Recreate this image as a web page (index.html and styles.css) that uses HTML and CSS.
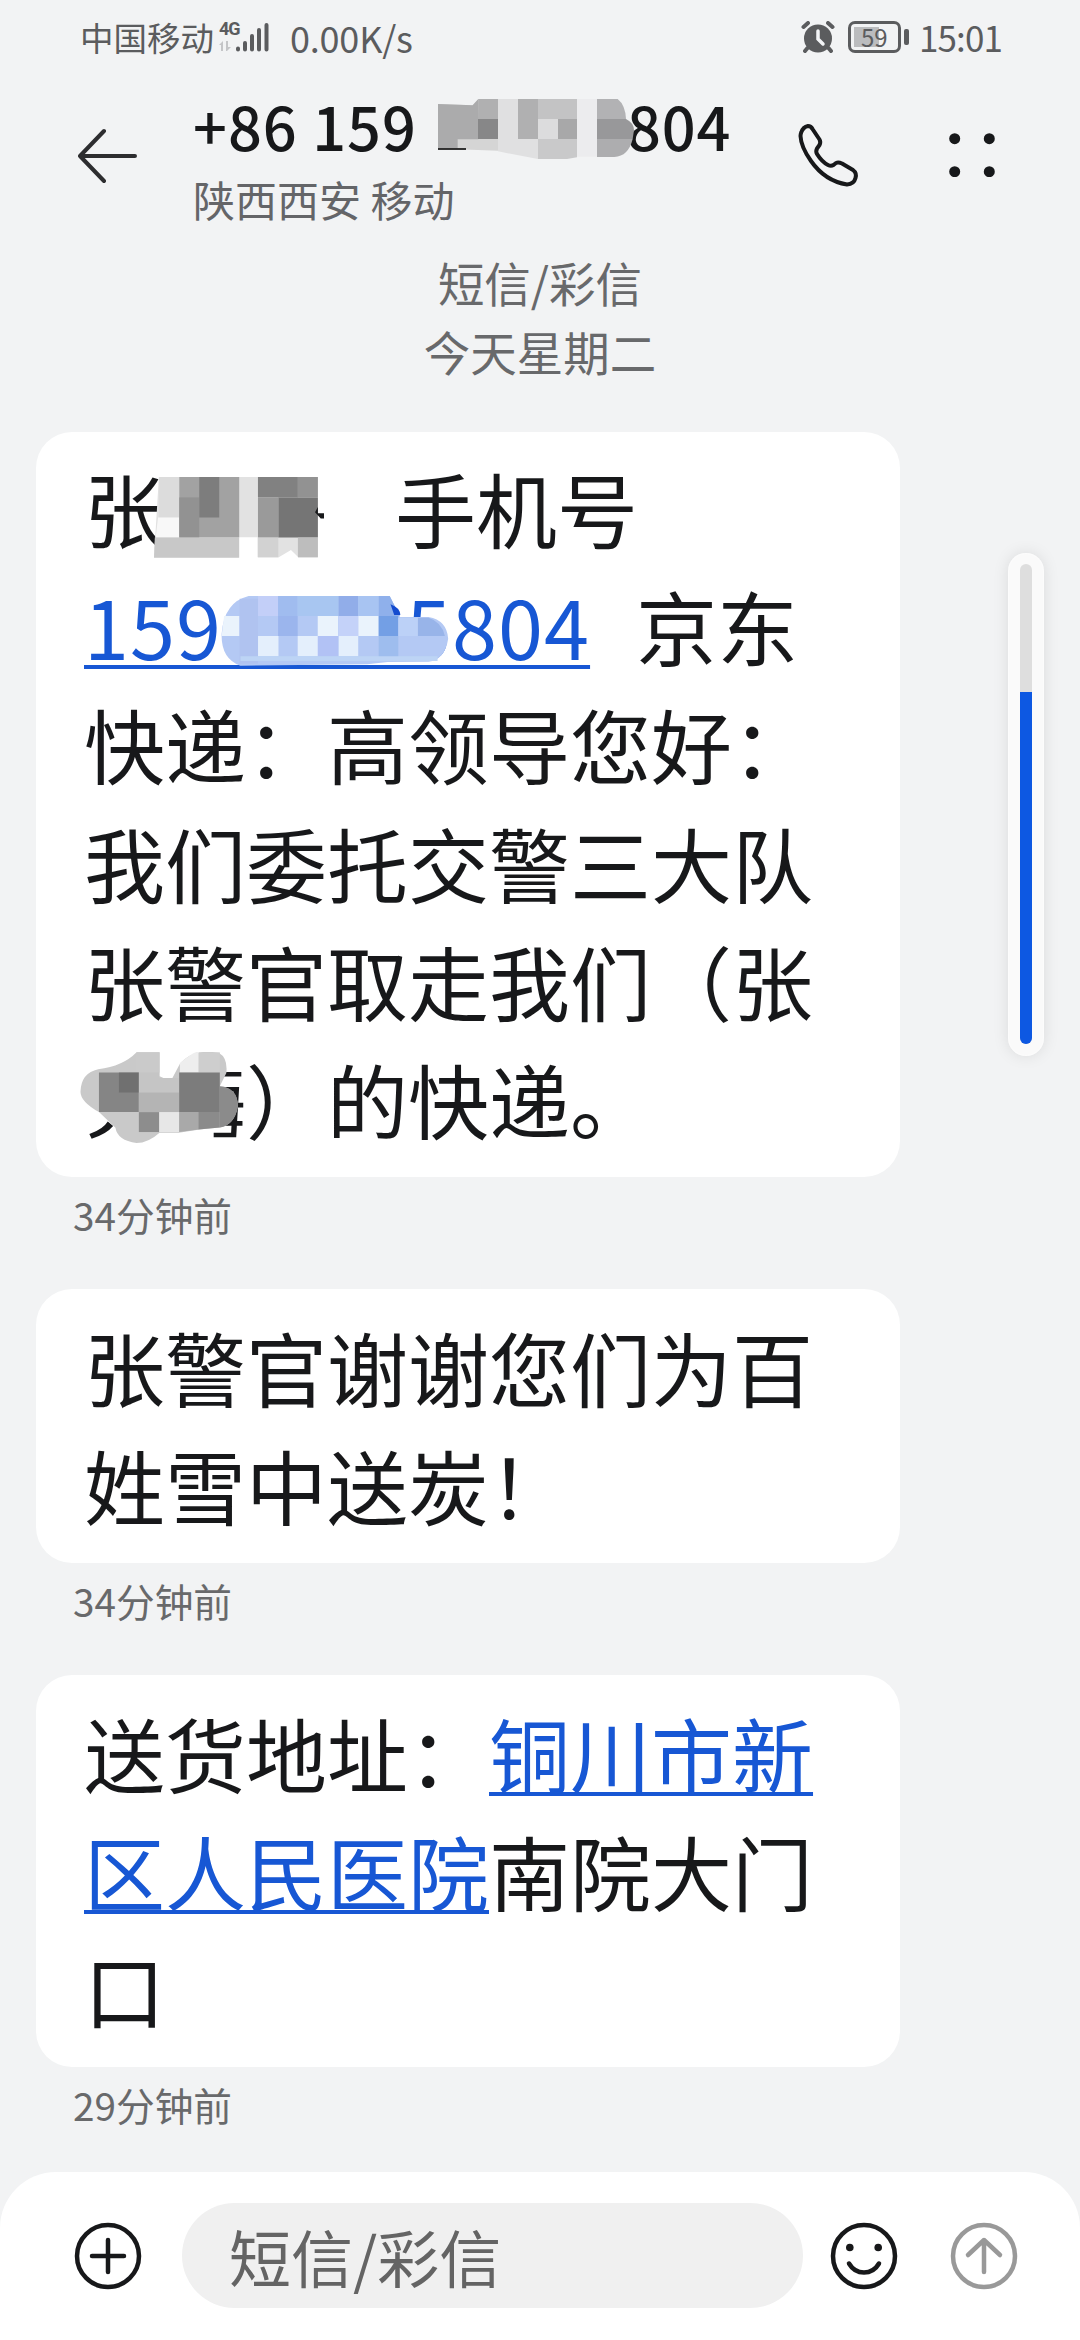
FILE: index.html
```html
<!DOCTYPE html>
<html lang="zh-CN">
<head>
<meta charset="utf-8">
<title>短信/彩信</title>
<link rel="stylesheet" href="styles.css">
</head>
<body>
<div class="screen">
  <div class="status">
    <span class="carrier">中国移动</span>
    <span class="network">
      <span class="gen">4G</span>
      <svg class="signal" viewBox="0 0 52 33" width="52" height="33">
        <g fill="#c4c5c7"><path d="M0 24l4-4v10H2v-6zM7 20h2v6h3l-4 4H7z"/></g>
        <g stroke="#5b5c5e" stroke-width="4" stroke-linecap="round"><path d="M19 27.500v1M26 22v6.500M33 15v13.500M40 9v19.500M47.500 4v24.500"/></g>
      </svg>
    </span>
    <span class="speed">0.00K/s</span>
    <svg class="alarm" viewBox="0 0 34 32" width="34" height="32">
      <circle cx="17" cy="17.500" r="14" fill="#5b5c5e"/>
      <path d="M2.500 6L7 2M27 2l4.500 4M6.500 27L4 30M27.500 27l2.500 3" stroke="#5b5c5e" stroke-width="4" stroke-linecap="round"/>
      <path d="M17 10v8l5 5" fill="none" stroke="#f3f4f6" stroke-width="3.500" stroke-linecap="round"/>
    </svg>
    <span class="battery"><span class="charge"></span><span class="percent">59</span></span>
    <span class="clock">15:01</span>
  </div>

  <div class="header">
    <svg class="back" viewBox="0 0 60 56" width="60" height="56"><path d="M2 28h55M26 3L2 28l24 25" fill="none" stroke="#2d2d2f" stroke-width="4" stroke-linecap="round" stroke-linejoin="round"/></svg>
    <div class="contact">
      <div class="number"><span>+86 159</span><svg class="blur-number" viewBox="51 57 588 180" width="196" height="60">
        <path d="M51 72L155 76L172 57H231V212L110 208H51z" fill="#d5d5d5"/>
        <path d="M51 72L155 76L172 57V178H110V205H51z" fill="#ababac"/>
        <path d="M172 57h59v60h-60z" fill="#b0b0b1"/><path d="M171 117h60v60h-60z" fill="#878788"/>
        <path d="M231 57h60v60h60v120L231 214z" fill="#e0e0e1"/>
        <path d="M291 57h60v120h-60z" fill="#b0b0b1"/>
        <path d="M351 57h117v60H351z" fill="#c3c3c4"/><path d="M351 117h60v60h-60z" fill="#dcdcdd"/>
        <path d="M411 117h57v60h-57z" fill="#a8a8a9"/><path d="M351 177h117v55l-30 5h-87z" fill="#c9c9ca"/>
        <path d="M468 57h60v173h-60z" fill="#ececee"/>
        <path d="M528 57h62Q613 75 615 117H528z" fill="#b2b2b4"/><path d="M528 117h87q24 12 24 34l-4 26H528z" fill="#98989a"/>
        <path d="M528 177h107q-13 52-55 54h-52z" fill="#adadaf"/>
        <path d="M51 207h84" stroke="#111" stroke-width="5"/>
      </svg><span>804</span></div>
      <div class="region">陕西西安 移动</div>
    </div>
    <svg class="call" viewBox="0 0 64 64" width="64" height="64"><path d="M4.200 9.500Q6 4 11 3Q14 3 15.500 6L22.500 16.500Q24 19 22.500 22L20 25.500Q18.500 28.500 20 31Q25 39 31 42Q34 43.500 36.500 42L39 40Q41.500 39 45 40.500L56 47Q60 50 58.500 55Q57 61 50 61.500Q28 58 14 38Q4 24 3.500 13Q3.600 11 4.200 9.500z" fill="none" stroke="#17181a" stroke-width="4" stroke-linejoin="round"/></svg>
    <svg class="more" viewBox="0 0 46 44" width="46" height="44" fill="#17181a"><circle cx="5.700" cy="5.700" r="5.500"/><circle cx="40.300" cy="5.700" r="5.500"/><circle cx="5.700" cy="38.700" r="5.500"/><circle cx="40.300" cy="38.700" r="5.500"/></svg>
  </div>

  <div class="dateline"><div class="channel">短信/彩信</div><div>今天星期二</div></div>

  <div class="thread">
    <div class="bubble first">
      张<span class="hidden-name"></span>手机号<br>
      <span class="link digits">159&#8199;&#8199;&#8199;&#8199;5804</span><span class="gap"></span>京东<br>
      快递：高领导您好：<br>
      我们委托交警三大队<br>
      张警官取走我们（张<br>
      <span class="hidden-pair"></span>）的快递。
      <svg class="mosaic name-top" viewBox="328 170 417 242" preserveAspectRatio="none">
        <path d="M340 170h390v240h-48l-18-22-30 22h-52v-60h-46v60H328z" fill="#e2e2e2"/>
        <path d="M340 170h50v121h-50z" fill="#dcdcdc"/><path d="M338 291h52v60h-58z" fill="#f8f8f8"/>
        <path d="M390 170h147v181H390z" fill="#a2a2a2"/><path d="M390 231h49v120h-49z" fill="#929292"/>
        <path d="M439 170h49v121h-49z" fill="#7d7d7d"/><path d="M330 351h207v60H328z" fill="#c8c8c8"/>
        <path d="M583 170h98v61h-98z" fill="#818181"/><path d="M681 170h49v61h-49z" fill="#929292"/>
        <path d="M583 231h50v120h-50z" fill="#9a9a9a"/><path d="M633 231h97v120h-97z" fill="#757575"/>
        <path d="M583 351h50v59h-50z" fill="#d2d2d2"/><path d="M681 351h49v59h-49z" fill="#bdbdbd"/>
        <path d="M723 275l7-15v18h15v16h-8z" fill="#17181a"/>
      </svg>
      <svg class="mosaic phone" viewBox="490 527 560 210" preserveAspectRatio="none">
        <path d="M560 527H905L930 590H1000Q1045 600 1048 655Q1040 718 1000 724L900 725 850 732 540 736Q492 715 494 640Q500 545 560 527z" fill="#b4c9f4"/>
        <path d="M538 535h45v195h-45z" fill="#b0c3f0"/><path d="M583 527h49v60h-49z" fill="#c3cff8"/>
        <path d="M632 527h48v60h-48z" fill="#a0bcef"/><path d="M632 587h48v60h-48z" fill="#9bb5ed"/><path d="M680 527h100v60H680z" fill="#a8c6f1"/>
        <path d="M780 527h48v60h-48z" fill="#91ade9"/><path d="M828 527h50v60h-50z" fill="#a8c4f2"/><path d="M878 527h27l25 60h-52z" fill="#8fb0eb"/>
        <path d="M500 587h37v60h-43zM729 587h50v60h-50zM828 587h50v60h-50z" fill="#eaf3fc"/>
        <path d="M583 647h50v61h-50zM680 647h50v61h-50zM780 647h48v61h-48z" fill="#e4effc"/><path d="M780 587h48v60h-48z" fill="#c4d2f9"/>
        <path d="M729 647h50v61h-50z" fill="#b2c2f5"/><path d="M878 587h48v60h-48z" fill="#739fe5"/>
        <path d="M878 647h48v74h-48z" fill="#9ebdee"/><path d="M926 592h48v55h-48z" fill="#bcd1f7"/><path d="M974 592h26q32 12 40 55h-66z" fill="#98b4e9"/>
        <path d="M540 708H1022v14H540z" fill="#bdd4f5"/><path d="M907 552q23 10 24 32h-15z" fill="#144bcf"/>
      </svg>
      <svg class="mosaic name-end" viewBox="50 67 430 280" preserveAspectRatio="none">
        <path d="M77 314q36-15 48-38l14 14q-18 25-56 38z" fill="#17181a"/>
        <path d="M425 134h48M410 179h50l-7 138h-52M450 227h28M430 282h46" fill="none" stroke="#17181a" stroke-width="14"/>
        <path d="M200 68h60v72l29 15 24-53Q350 55 415 70Q438 85 434 130L417 170Q464 177 464 230Q455 287 417 294L365 300 310 310H260Q230 341 200 341Q150 333 145 295L102 248Q52 215 54 185Q56 130 100 119 165 110 200 68z" fill="#c9c9c9"/>
        <path d="M200 68h60v61h-60z" fill="#cacaca"/><path d="M313 100q42-40 49-32v61h-49z" fill="#eee"/><path d="M362 68h55v61h-55z" fill="#cecece"/>
        <path d="M102 129h104v119H102z" fill="#858585"/><path d="M154 129h52v60h-52z" fill="#707070"/>
        <path d="M206 129h53v60h-53zM259 145h52v44h-52z" fill="#c5c5c5"/><path d="M206 189h105v59H206z" fill="#b4b4b4"/>
        <path d="M311 129h106v119H311z" fill="#7c7c7c"/><path d="M417 170q47 4 47 60-8 57-47 64z" fill="#8b8b8b"/>
        <path d="M206 248h53v60h-53z" fill="#8d8d8d"/><path d="M259 248h52v60h-52z" fill="#e7e7e7"/><path d="M311 248h50v52l-50 8z" fill="#a9a9a9"/><path d="M361 248h56v46l-56 6z" fill="#8b8b8b"/>
      </svg>
    </div>
    <div class="time">34分钟前</div>
    <div class="bubble">张警官谢谢您们为百<br>姓雪中送炭！</div>
    <div class="time">34分钟前</div>
    <div class="bubble">送货地址：<span class="link">铜川市新</span><br><span class="link">区人民医院</span>南院大门<br>口</div>
    <div class="time">29分钟前</div>
  </div>

  <div class="composer">
    <svg class="add" viewBox="0 0 68 68" width="68" height="68" fill="none" stroke="#17181a" stroke-width="4.500" stroke-linecap="round"><circle cx="34" cy="34" r="31"/><path d="M34 18v32M18 34h32"/></svg>
    <div class="field">短信/彩信</div>
    <svg class="emoji" viewBox="0 0 68 68" width="68" height="68" fill="none" stroke="#17181a" stroke-width="4.500" stroke-linecap="round"><circle cx="34" cy="34" r="31"/><path d="M19 41.500c7 12 23 12 30 0"/><g fill="#17181a" stroke="none"><circle cx="19.800" cy="25.500" r="3.800"/><circle cx="48.200" cy="25.500" r="3.800"/></g></svg>
    <svg class="send" viewBox="0 0 68 68" width="68" height="68" fill="none" stroke="#999" stroke-width="4.500" stroke-linecap="round" stroke-linejoin="round"><circle cx="34" cy="34" r="31"/><path d="M34 50V18M18 33l16-15 16 15"/></svg>
  </div>

  <div class="volume"><div class="track"><div class="level"></div></div></div>
</div>
</body>
</html>
```

FILE: styles.css
```css
* { box-sizing: border-box; }
body { margin: 0; background: #f2f3f4; }
svg { display: block; flex: none; }

.screen {
  position: relative;
  display: flex;
  flex-direction: column;
  width: 1080px;
  height: 2340px;
  overflow: hidden;
  background: #f2f3f4;
  color: #17181a;
  font-family: "Noto Sans CJK SC", sans-serif;
  white-space: nowrap;
}

/* Status bar */
.status {
  flex: none;
  display: flex;
  align-items: center;
  height: 74px;
  padding-left: 80px;
  color: #5b5c5e;
  font-size: 36px;
  line-height: 74px;
}
.carrier { width: 139px; font-size: 33.500px; }
.network { position: relative; width: 71px; height: 33px; }
.gen { position: absolute; left: 0; top: 0; font-family: Roboto, sans-serif; font-size: 18px; font-weight: 700; line-height: 15px; letter-spacing: -1px; }
.speed { width: 509px; font-size: 36px; letter-spacing: -0.200px; }
.alarm { width: 34px; margin-right: 13px; margin-left: 2px; }
.battery {
  position: relative;
  width: 53px;
  height: 32px;
  margin-right: 18px;
  border: 3px solid #5b5c5e;
  border-radius: 7px;
}
.battery::after { content: ""; position: absolute; right: -11px; top: 5px; width: 5px; height: 16px; border-radius: 2px; background: #5b5c5e; }
.charge { position: absolute; left: 3px; top: 3px; width: 25px; height: 20px; background: #bbbcbe; }
.percent { position: absolute; left: 10px; top: 0; font-size: 24px; line-height: 26px; }
.clock { font-size: 35px; letter-spacing: -0.900px; }

/* Conversation header */
.header { flex: none; display: flex; height: 158px; padding-left: 78px; }
.back { margin-top: 54px; }
.contact { width: 604px; padding: 6px 0 0 55px; }
.number { display: flex; height: 90px; font-size: 59.500px; font-weight: 500; line-height: 90px; }
.number span:first-child { width: 245px; letter-spacing: 1px; }
.number span:last-child { margin-left: -7px; letter-spacing: 0.800px; }
.blur-number { position: relative; z-index: 1; margin-top: 19px; }
.region { height: 58px; color: #646568; font-size: 42px; line-height: 58px; }
.call { margin: 49px 0 0 55px; }
.more { margin: 59px 0 0 88px; }

.dateline { flex: none; height: 200px; padding-top: 15px; color: #68696b; font-size: 46.500px; line-height: 69px; text-align: center; }

/* Messages */
.thread { flex: none; height: 1740px; padding-left: 36px; }
.bubble {
  position: relative;
  width: 864px;
  padding: 18px 48px 19.500px;
  border-radius: 36px;
  background: #fff;
  font-size: 81px;
  line-height: 118.200px;
  text-spacing-trim: space-all;
}
.first { padding-top: 16px; }
.link { color: #1757d4; text-decoration: underline; text-decoration-thickness: 4px; text-underline-offset: 5px; text-decoration-skip-ink: none; }
.digits { letter-spacing: 1.050px; }
.hidden-name, .hidden-pair, .gap { display: inline-block; height: 1px; }
.hidden-name { width: 230px; }
.hidden-pair { width: 162px; }
.gap { width: 46px; }
.mosaic { position: absolute; }
.name-top { left: 118px; top: 45px; width: 170px; height: 81px; }
.phone { left: 184px; top: 164px; width: 229px; height: 70px; }
.name-end { left: 43px; top: 620px; width: 165px; height: 93px; }
.time { height: 112px; padding: 8px 0 0 37px; color: #68696b; font-size: 38.700px; line-height: 58px; }

/* Message entry */
.composer {
  flex: none;
  display: flex;
  align-items: flex-start;
  height: 168px;
  padding: 31px 0 0 74px;
  border-radius: 56px 56px 0 0;
  background: #fff;
}
.add, .emoji, .send { margin-top: 19px; }
.field {
  width: 621px;
  height: 105px;
  margin: 0 27px 0 40px;
  padding-left: 47px;
  border-radius: 53px;
  background: #f0f0f0;
  color: #646464;
  font-size: 62px;
  line-height: 106px;
}
.send { margin-left: 52px; }

/* Volume overlay floating over the thread */
.volume {
  position: absolute;
  left: 1008px;
  top: 553px;
  width: 36px;
  height: 503px;
  padding: 11px 12px 12px;
  border-radius: 18px;
  background: #fafafa;
  box-shadow: 0 0 16px rgba(0, 0, 0, 0.100), inset 0 0 3px #fff;
}
.track { display: flex; align-items: flex-end; height: 480px; border-radius: 6px; overflow: hidden; background: #dedede; }
.level { width: 12px; height: 352px; background: #0d58e2; }
```
